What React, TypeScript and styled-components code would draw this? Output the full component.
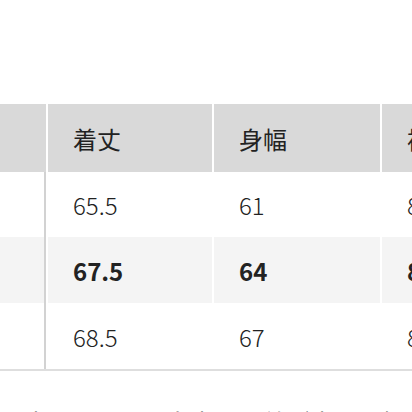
import React from 'react';
import styled, { createGlobalStyle } from 'styled-components';

const GlobalStyle = createGlobalStyle`
    html, body {
        margin: 0;
        padding: 0;
        background: #ffffff;
        overflow: hidden;
    }
    body {
        font-family: "Noto Sans CJK JP", "Noto Sans", sans-serif;
        color: #222222;
    }
`;

const Page = styled.div`
    width: 412px;
    height: 412px;
    overflow: hidden;
    padding-top: 104px;
    box-sizing: border-box;
`;

const Table = styled.div`
    width: 620px;
    border-bottom: 2px solid #dedede;
`;

const Row = styled.div<{ $height: number }>`
    display: grid;
    grid-template-columns: 46px 164px 166px 200px;
    column-gap: 2px;
    height: ${(p) => p.$height}px;
`;

const Cell = styled.div<{ $bg: string; $bold?: boolean; $divider?: boolean }>`
    display: flex;
    align-items: center;
    padding-left: 25px;
    background: ${(p) => p.$bg};
    font-family: "Noto Sans CJK JP", "Noto Sans", sans-serif;
    font-size: 24px;
    font-weight: ${(p) => (p.$bold ? 700 : 300)};
    color: #222222;
    border-right: ${(p) => (p.$divider ? '2px solid #d2d2d2' : 'none')};
    white-space: nowrap;
`;

const HeadCell = styled(Cell)`
    font-weight: 400;
    font-size: 24px;
`;

const Note = styled.p`
    margin: 34px 0 0 0;
    font-size: 24px;
    line-height: 1.4;
    white-space: nowrap;
    color: #333333;
`;

const headers = ['着丈', '身幅', '裄丈'];

const rows = [
    { values: ['65.5', '61', '83'], bold: false, bg: '#ffffff' },
    { values: ['67.5', '64', '85'], bold: true, bg: '#f4f4f4' },
    { values: ['68.5', '67', '87'], bold: false, bg: '#ffffff' },
];

const App: React.FC = () => {
    return (
        <Page>
            <GlobalStyle />
            <Table>
                <Row $height={68}>
                    <HeadCell $bg="#d9d9d9" />
                    {headers.map((h) => (
                        <HeadCell key={h} $bg="#d9d9d9">{h}</HeadCell>
                    ))}
                </Row>
                {rows.map((r, i) => (
                    <Row key={i} $height={i === 0 ? 65 : 66}>
                        <Cell $bg={r.bg} $divider />
                        {r.values.map((v, j) => (
                            <Cell key={j} $bg={r.bg} $bold={r.bold}>{v}</Cell>
                        ))}
                    </Row>
                ))}
            </Table>
            <Note>※商品によって多少の誤差が生じる場合があります。</Note>
        </Page>
    );
};

export default App;
